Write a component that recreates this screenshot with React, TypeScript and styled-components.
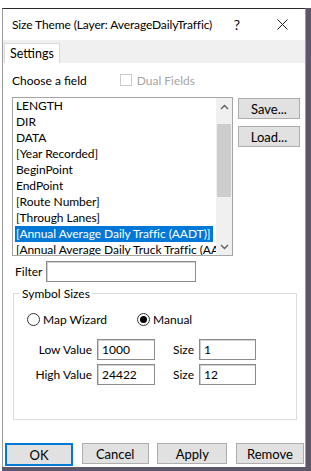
import * as React from 'react'
import styled, { createGlobalStyle } from 'styled-components'

const Global = createGlobalStyle`
  html, body {
    margin: 0;
    padding: 0;
    background: #ffffff;
  }
  body {
    font-family: Lato, "Noto Sans", sans-serif;
    font-size: 12px;
    color: #000;
  }
`

const Backdrop = styled.div`
  margin: 8px 0 0 2px;
  width: 309px;
  height: 463px;
  box-sizing: border-box;
  padding: 0 5px 4px 0;
  background: #5e566a;
`

const Window = styled.div`
  width: 304px;
  height: 459px;
  box-sizing: border-box;
  background: #ffffff;
  border-top: 1px solid #2b2b2b;
  border-left: 1px solid #9a9a9a;
  border-right: 1px solid #9a9a9a;
  display: flex;
  flex-direction: column;
`

const TitleBar = styled.div`
  height: 31px;
  display: flex;
  align-items: center;
  padding-left: 9px;
`

const Title = styled.div`
  flex: 1;
  min-width: 0;
  font-size: 12px;
  letter-spacing: -0.12px;
  white-space: nowrap;
`

const Help = styled.div`
  width: 20px;
  text-align: center;
  font-size: 14px;
  margin-right: 15px;
`

const CloseBtn = styled.div`
  width: 40px;
  margin-right: 3px;
  display: flex;
  justify-content: center;
`

const TabStrip = styled.div`
  height: 23px;
  background: #f0f0f0;
  display: flex;
  align-items: flex-end;
  padding-left: 1px;
`

const Tab = styled.div`
  width: 56px;
  height: 20px;
  box-sizing: border-box;
  background: #ffffff;
  border: 1px solid #d9d9d9;
  border-bottom: none;
  padding: 2px 0 0 5px;
  font-size: 12.5px;
`

const Panel = styled.div`
  flex: 1;
  display: flex;
  flex-direction: column;
  padding: 8px 0 0 9px;
`

const FieldHeader = styled.div`
  display: flex;
  align-items: center;
  height: 18px;
`

const Label = styled.span<{ $muted?: boolean }>`
  color: ${p => (p.$muted ? '#a6a6a6' : '#000')};
  white-space: nowrap;
`

const CheckBox = styled.span`
  width: 12px;
  height: 12px;
  box-sizing: border-box;
  border: 1px solid #cccccc;
  margin: 0 5px 0 33px;
`

const ListRow = styled.div`
  display: flex;
  margin-top: 8px;
`

const ListBox = styled.div`
  width: 221px;
  height: 159px;
  box-sizing: border-box;
  border: 1px solid #a5a5a5;
  display: flex;
  overflow: hidden;
`

const Items = styled.div`
  flex: 1;
  min-width: 0;
  overflow: hidden;
  padding: 0 0 0 2px;
`

const Item = styled.div<{ $selected?: boolean }>`
  height: 16px;
  line-height: 16px;
  white-space: nowrap;
  letter-spacing: -0.05px;
  padding-left: 1px;
  width: ${p => (p.$selected ? 'max-content' : 'auto')};
  padding-right: ${p => (p.$selected ? '3px' : '0')};
  background: ${p => (p.$selected ? '#0078d7' : 'transparent')};
  color: ${p => (p.$selected ? '#fff' : '#000')};
`

const ScrollBar = styled.div`
  width: 16px;
  flex-shrink: 0;
  background: #f0f0f0;
  display: flex;
  flex-direction: column;
  align-items: center;
`

const Arrow = styled.div`
  height: 17px;
  width: 16px;
  display: flex;
  align-items: center;
  justify-content: center;
`

const Track = styled.div`
  flex: 1;
  width: 14px;
`

const Thumb = styled.div`
  width: 14px;
  height: 73px;
  margin-top: 9px;
  background: #cdcdcd;
`

const SideButtons = styled.div`
  display: flex;
  flex-direction: column;
  gap: 7px;
  margin-left: 5px;
  padding-top: 1px;
`

const Button = styled.div<{ $w?: number; $default?: boolean }>`
  width: ${p => p.$w ?? 62}px;
  height: ${p => (p.$default ? 23 : 21)}px;
  box-sizing: border-box;
  background: #e1e1e1;
  border: ${p => (p.$default ? '2px solid #0078d7' : '1px solid #adadad')};
  display: flex;
  align-items: center;
  justify-content: center;
  font-size: 13px;
`

const FilterRow = styled.div`
  display: flex;
  align-items: center;
  margin-top: 5px;
  padding-left: 3px;
  gap: 4px;
`

const Input = styled.div<{ $w: number }>`
  width: ${p => p.$w}px;
  height: 21px;
  box-sizing: border-box;
  border: 1px solid #8c8c8c;
  box-shadow: inset 1px 1px 0 #d0d0d0;
  display: flex;
  align-items: center;
  padding-left: 4px;
  background: #fff;
`

const Group = styled.fieldset`
  margin: 4px 0 0 1px;
  width: 284px;
  height: 134px;
  box-sizing: border-box;
  border: 1px solid #dcdcdc;
  padding: 11px 0 0 0;
  display: flex;
  flex-direction: column;
`

const Legend = styled.legend`
  padding: 0 2px;
  margin-left: 6px;
`

const RadioRow = styled.div`
  display: flex;
  align-items: center;
  padding-left: 13px;
  gap: 30px;
`

const RadioOpt = styled.div`
  display: flex;
  align-items: center;
  gap: 3px;
`

const Radio = styled.span<{ $on?: boolean }>`
  width: 13px;
  height: 13px;
  box-sizing: border-box;
  border-radius: 50%;
  border: 1px solid #333;
  display: flex;
  align-items: center;
  justify-content: center;
  &::after {
    content: '';
    width: 7px;
    height: 7px;
    border-radius: 50%;
    background: ${p => (p.$on ? '#000' : 'transparent')};
  }
`

const ValueGrid = styled.div`
  display: grid;
  grid-template-columns: 66px 58px 34px 57px;
  column-gap: 5px;
  row-gap: 4px;
  align-items: center;
  margin-top: 12px;
  padding-left: 12px;
`

const RightLabel = styled.span`
  text-align: right;
  white-space: nowrap;
`

const Footer = styled.div`
  display: flex;
  justify-content: space-between;
  padding: 0 1px 1px 2px;
  margin-top: auto;
`

const fields = [
  'LENGTH',
  'DIR',
  'DATA',
  '[Year Recorded]',
  'BeginPoint',
  'EndPoint',
  '[Route Number]',
  '[Through Lanes]',
  '[Annual Average Daily Traffic (AADT)]',
  '[Annual Average Daily Truck Traffic (AADTT)]',
]

const Chevron = ({ up }: { up?: boolean }) => (
  <svg width="9" height="6" viewBox="0 0 9 6">
    <path
      d={up ? 'M1 5 L4.5 1.5 L8 5' : 'M1 1 L4.5 4.5 L8 1'}
      fill="none"
      stroke="#606060"
      strokeWidth="1.4"
    />
  </svg>
)

export default function App() {
  return (
    <>
      <Global />
      <Backdrop>
        <Window>
          <TitleBar>
            <Title>Size Theme (Layer: AverageDailyTraffic)</Title>
            <Help>?</Help>
            <CloseBtn>
              <svg width="11" height="11" viewBox="0 0 11 11">
                <path d="M0.5 0.5 L10.5 10.5 M10.5 0.5 L0.5 10.5" stroke="#222" strokeWidth="1" />
              </svg>
            </CloseBtn>
          </TitleBar>
          <TabStrip>
            <Tab>Settings</Tab>
          </TabStrip>
          <Panel>
            <FieldHeader>
              <Label>Choose a field</Label>
              <CheckBox />
              <Label $muted>Dual Fields</Label>
            </FieldHeader>
            <ListRow>
              <ListBox>
                <Items>
                  {fields.map(f => (
                    <Item key={f} $selected={f.includes('(AADT)')}>
                      {f}
                    </Item>
                  ))}
                </Items>
                <ScrollBar>
                  <Arrow>
                    <Chevron up />
                  </Arrow>
                  <Track>
                    <Thumb />
                  </Track>
                  <Arrow>
                    <Chevron />
                  </Arrow>
                </ScrollBar>
              </ListBox>
              <SideButtons>
                <Button>Save...</Button>
                <Button>Load...</Button>
              </SideButtons>
            </ListRow>
            <FilterRow>
              <Label>Filter</Label>
              <Input $w={150} />
            </FilterRow>
            <Group>
              <Legend>Symbol Sizes</Legend>
              <RadioRow>
                <RadioOpt>
                  <Radio />
                  <Label>Map Wizard</Label>
                </RadioOpt>
                <RadioOpt>
                  <Radio $on />
                  <Label>Manual</Label>
                </RadioOpt>
              </RadioRow>
              <ValueGrid>
                <RightLabel>Low Value</RightLabel>
                <Input $w={58}>1000</Input>
                <RightLabel>Size</RightLabel>
                <Input $w={57}>1</Input>
                <RightLabel>High Value</RightLabel>
                <Input $w={58}>24422</Input>
                <RightLabel>Size</RightLabel>
                <Input $w={57}>12</Input>
              </ValueGrid>
            </Group>
          </Panel>
          <Footer>
            <Button $w={68} $default>OK</Button>
            <Button $w={67}>Cancel</Button>
            <Button $w={70}>Apply</Button>
            <Button $w={68}>Remove</Button>
          </Footer>
        </Window>
      </Backdrop>
    </>
  )
}
